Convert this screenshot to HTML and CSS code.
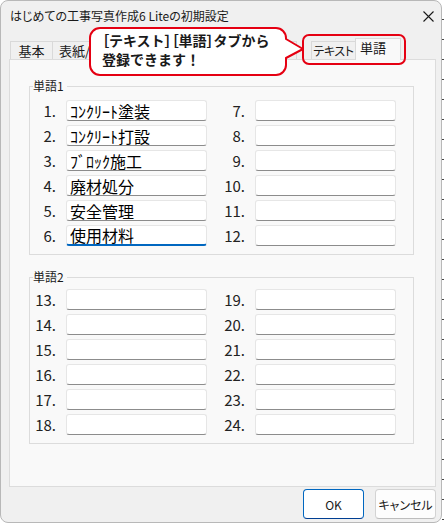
FILE: index.html
```html
<!DOCTYPE html>
<html lang="ja">
<head>
<meta charset="utf-8">
<title>初期設定</title>
<link rel="stylesheet" href="styles.css">
</head>
<body>
<div class="window">
  <div class="titlebar">
    <span class="title">はじめての工事写真作成6 Liteの初期設定</span>
    <svg class="close" width="11" height="11" viewBox="0 0 11 11"><path d="M0.5 0.5 L10.5 10.5 M10.5 0.5 L0.5 10.5" stroke="#1a1a1a" stroke-width="1.1" fill="none"/></svg>
  </div>
  <div class="tabs">
    <div class="tab w42">基本</div>
    <div class="tab w64 clip"><span>表紙/</span></div>
    <div class="tab w60"></div>
    <div class="tab w64"></div>
    <div class="tab w56"></div>
    <div class="tab tab-text">テキスト</div>
    <div class="tab active">単語</div>
  </div>
  <div class="panel">
    <fieldset class="group g1">
      <legend>単語1</legend>
      <div class="grid">
        <span class="num">1.</span><input class="field" type="text" value="ｺﾝｸﾘｰﾄ塗装">
        <span class="num">7.</span><input class="field" type="text" value="">
        <span class="num">2.</span><input class="field" type="text" value="ｺﾝｸﾘｰﾄ打設">
        <span class="num">8.</span><input class="field" type="text" value="">
        <span class="num">3.</span><input class="field" type="text" value="ﾌﾞﾛｯｸ施工">
        <span class="num">9.</span><input class="field" type="text" value="">
        <span class="num">4.</span><input class="field" type="text" value="廃材処分">
        <span class="num">10.</span><input class="field" type="text" value="">
        <span class="num">5.</span><input class="field" type="text" value="安全管理">
        <span class="num">11.</span><input class="field" type="text" value="">
        <span class="num">6.</span><input class="field focused" type="text" value="使用材料">
        <span class="num">12.</span><input class="field" type="text" value="">
      </div>
    </fieldset>
    <fieldset class="group g2">
      <legend>単語2</legend>
      <div class="grid">
        <span class="num">13.</span><input class="field" type="text" value="">
        <span class="num">19.</span><input class="field" type="text" value="">
        <span class="num">14.</span><input class="field" type="text" value="">
        <span class="num">20.</span><input class="field" type="text" value="">
        <span class="num">15.</span><input class="field" type="text" value="">
        <span class="num">21.</span><input class="field" type="text" value="">
        <span class="num">16.</span><input class="field" type="text" value="">
        <span class="num">22.</span><input class="field" type="text" value="">
        <span class="num">17.</span><input class="field" type="text" value="">
        <span class="num">23.</span><input class="field" type="text" value="">
        <span class="num">18.</span><input class="field" type="text" value="">
        <span class="num">24.</span><input class="field" type="text" value="">
      </div>
    </fieldset>
  </div>
  <div class="buttons">
    <button class="btn primary" type="button">OK</button>
    <button class="btn" type="button">キャンセル</button>
  </div>

  <div class="callout">
    <svg class="callout-shape" width="216" height="49" viewBox="0 0 216 49">
      <path d="M11,1 H187 A10,10 0 0 1 197,11 V12 L214,22 L197,31 V38 A10,10 0 0 1 187,48 H11 A10,10 0 0 1 1,38 V11 A10,10 0 0 1 11,1 Z" fill="#ffffff" stroke="#e50012" stroke-width="2" stroke-linejoin="round"/>
    </svg>
    <div class="callout-text"><span class="br">［</span>テキスト<span class="br">］［</span>単語<span class="br">］</span>タブから<br>登録できます！</div>
  </div>
  <div class="highlight"></div>
</div>
</body>
</html>
```

FILE: styles.css
```css
* {
  box-sizing: border-box;
}

html, body {
  margin: 0;
  padding: 0;
}

body {
  width: 444px;
  height: 525px;
  overflow: hidden;
  background-color: #ffffff;
  background-image: repeating-linear-gradient(to bottom, transparent 0 19px, #444 19px 20px);
  background-size: 2px 100%;
  background-position: right top;
  background-repeat: no-repeat;
  font-family: "Noto Sans CJK JP", "Noto Sans", sans-serif;
  color: #1a1a1a;
}

.window {
  position: relative;
  width: 442px;
  height: 523px;
  border: 1px solid #b8b8b8;
  border-radius: 8px;
  background: #f0f0f0;
  overflow: hidden;
}

.titlebar {
  height: 30px;
  display: flex;
  align-items: center;
  justify-content: space-between;
  padding: 0 7px 0 9px;
  font-size: 12px;
  font-feature-settings: "palt";
}

.title {
  line-height: 14px;
}

.close {
  display: block;
}

.tabs {
  position: relative;
  z-index: 1;
  display: flex;
  align-items: flex-end;
  height: 21px;
  margin-top: 7px;
  padding-left: 9px;
}

.tab {
  height: 18px;
  border: 1px solid #d9d9d9;
  border-bottom: none;
  background: #f0f0f0;
  margin-right: -1px;
  display: flex;
  align-items: center;
  justify-content: center;
  font-size: 13px;
  line-height: 14px;
  font-feature-settings: "palt";
  color: #1a1a1a;
  white-space: nowrap;
  overflow: hidden;
}

.w42 { width: 43px; }
.w64 { width: 65px; }
.w60 { width: 61px; }
.w56 { width: 57px; }

.tab.clip {
  justify-content: flex-start;
  padding-left: 6px;
}

.tab-text {
  margin-left: 15px;
  width: 45px;
  font-size: 12px;
  letter-spacing: -0.3px;
}

.tab.active {
  width: 46px;
  height: 22px;
  margin-bottom: -1px;
  background: #f9f9f9;
  align-items: flex-start;
  justify-content: flex-start;
  padding: 2px 0 0 4px;
}

.panel {
  margin-left: 8px;
  width: 427px;
  height: 428px;
  border: 1px solid #dcdcdc;
  background: #f9f9f9;
  padding: 19px 21px 0 19px;
}

.group {
  margin: 0;
  padding: 0 0 8px 0;
  width: 385px;
  border: 1px solid #dcdcdc;
  min-width: 0;
}

.group legend {
  padding: 0 3px 0 0;
  margin-left: 3px;
  font-size: 12px;
  line-height: 14px;
  color: #1a1a1a;
}

.g2 {
  margin-top: 15px;
}

.grid {
  display: grid;
  grid-template-columns: 26px 141px 28px 141px;
  grid-auto-rows: 21px;
  column-gap: 10px;
  row-gap: 4px;
}

.g1 .grid {
  padding-top: 7px;
}

.g2 .grid {
  padding-top: 5px;
}

.num {
  font-size: 15px;
  line-height: 21px;
  text-align: right;
  color: #222;
  white-space: nowrap;
}

.field {
  display: block;
  width: 141px;
  height: 21px;
  margin: 0;
  padding: 0 3px;
  border: 1px solid #e6e6e6;
  border-bottom-color: #8c8c8c;
  border-radius: 3px;
  background: #ffffff;
  font-family: "Noto Sans CJK JP", sans-serif;
  font-size: 16px;
  line-height: 19px;
  color: #000;
  outline: none;
}

.field.focused {
  border-bottom: 2px solid #0067c0;
}

.buttons {
  display: flex;
  justify-content: flex-end;
  gap: 11px;
  margin-top: 2px;
  padding-right: 5px;
}

.btn {
  width: 61px;
  height: 30px;
  margin: 0;
  padding: 0;
  border: 1px solid #d3d3d3;
  border-bottom-color: #bdbdbd;
  border-radius: 4px;
  background: #fdfdfd;
  font-family: "Noto Sans CJK JP", sans-serif;
  font-size: 12px;
  font-feature-settings: "palt";
  color: #1a1a1a;
}

.btn.primary {
  background: #ffffff;
  border-color: #0067c0;
  border-bottom-color: #003e92;
}

.callout {
  position: absolute;
  left: 88px;
  top: 26px;
  width: 216px;
  height: 49px;
  z-index: 5;
}

.callout-shape {
  position: absolute;
  left: 0;
  top: 0;
  display: block;
}

.callout-text {
  position: relative;
  padding: 4px 0 0 13px;
  font-size: 14px;
  line-height: 19px;
  font-weight: 700;
  color: #1a1a1a;
  white-space: nowrap;
}

.callout-text .br {
  font-feature-settings: "palt";
}

.highlight {
  position: absolute;
  left: 301px;
  top: 33px;
  width: 104px;
  height: 31px;
  border: 2px solid #e50012;
  border-radius: 7px;
  z-index: 5;
}
```
